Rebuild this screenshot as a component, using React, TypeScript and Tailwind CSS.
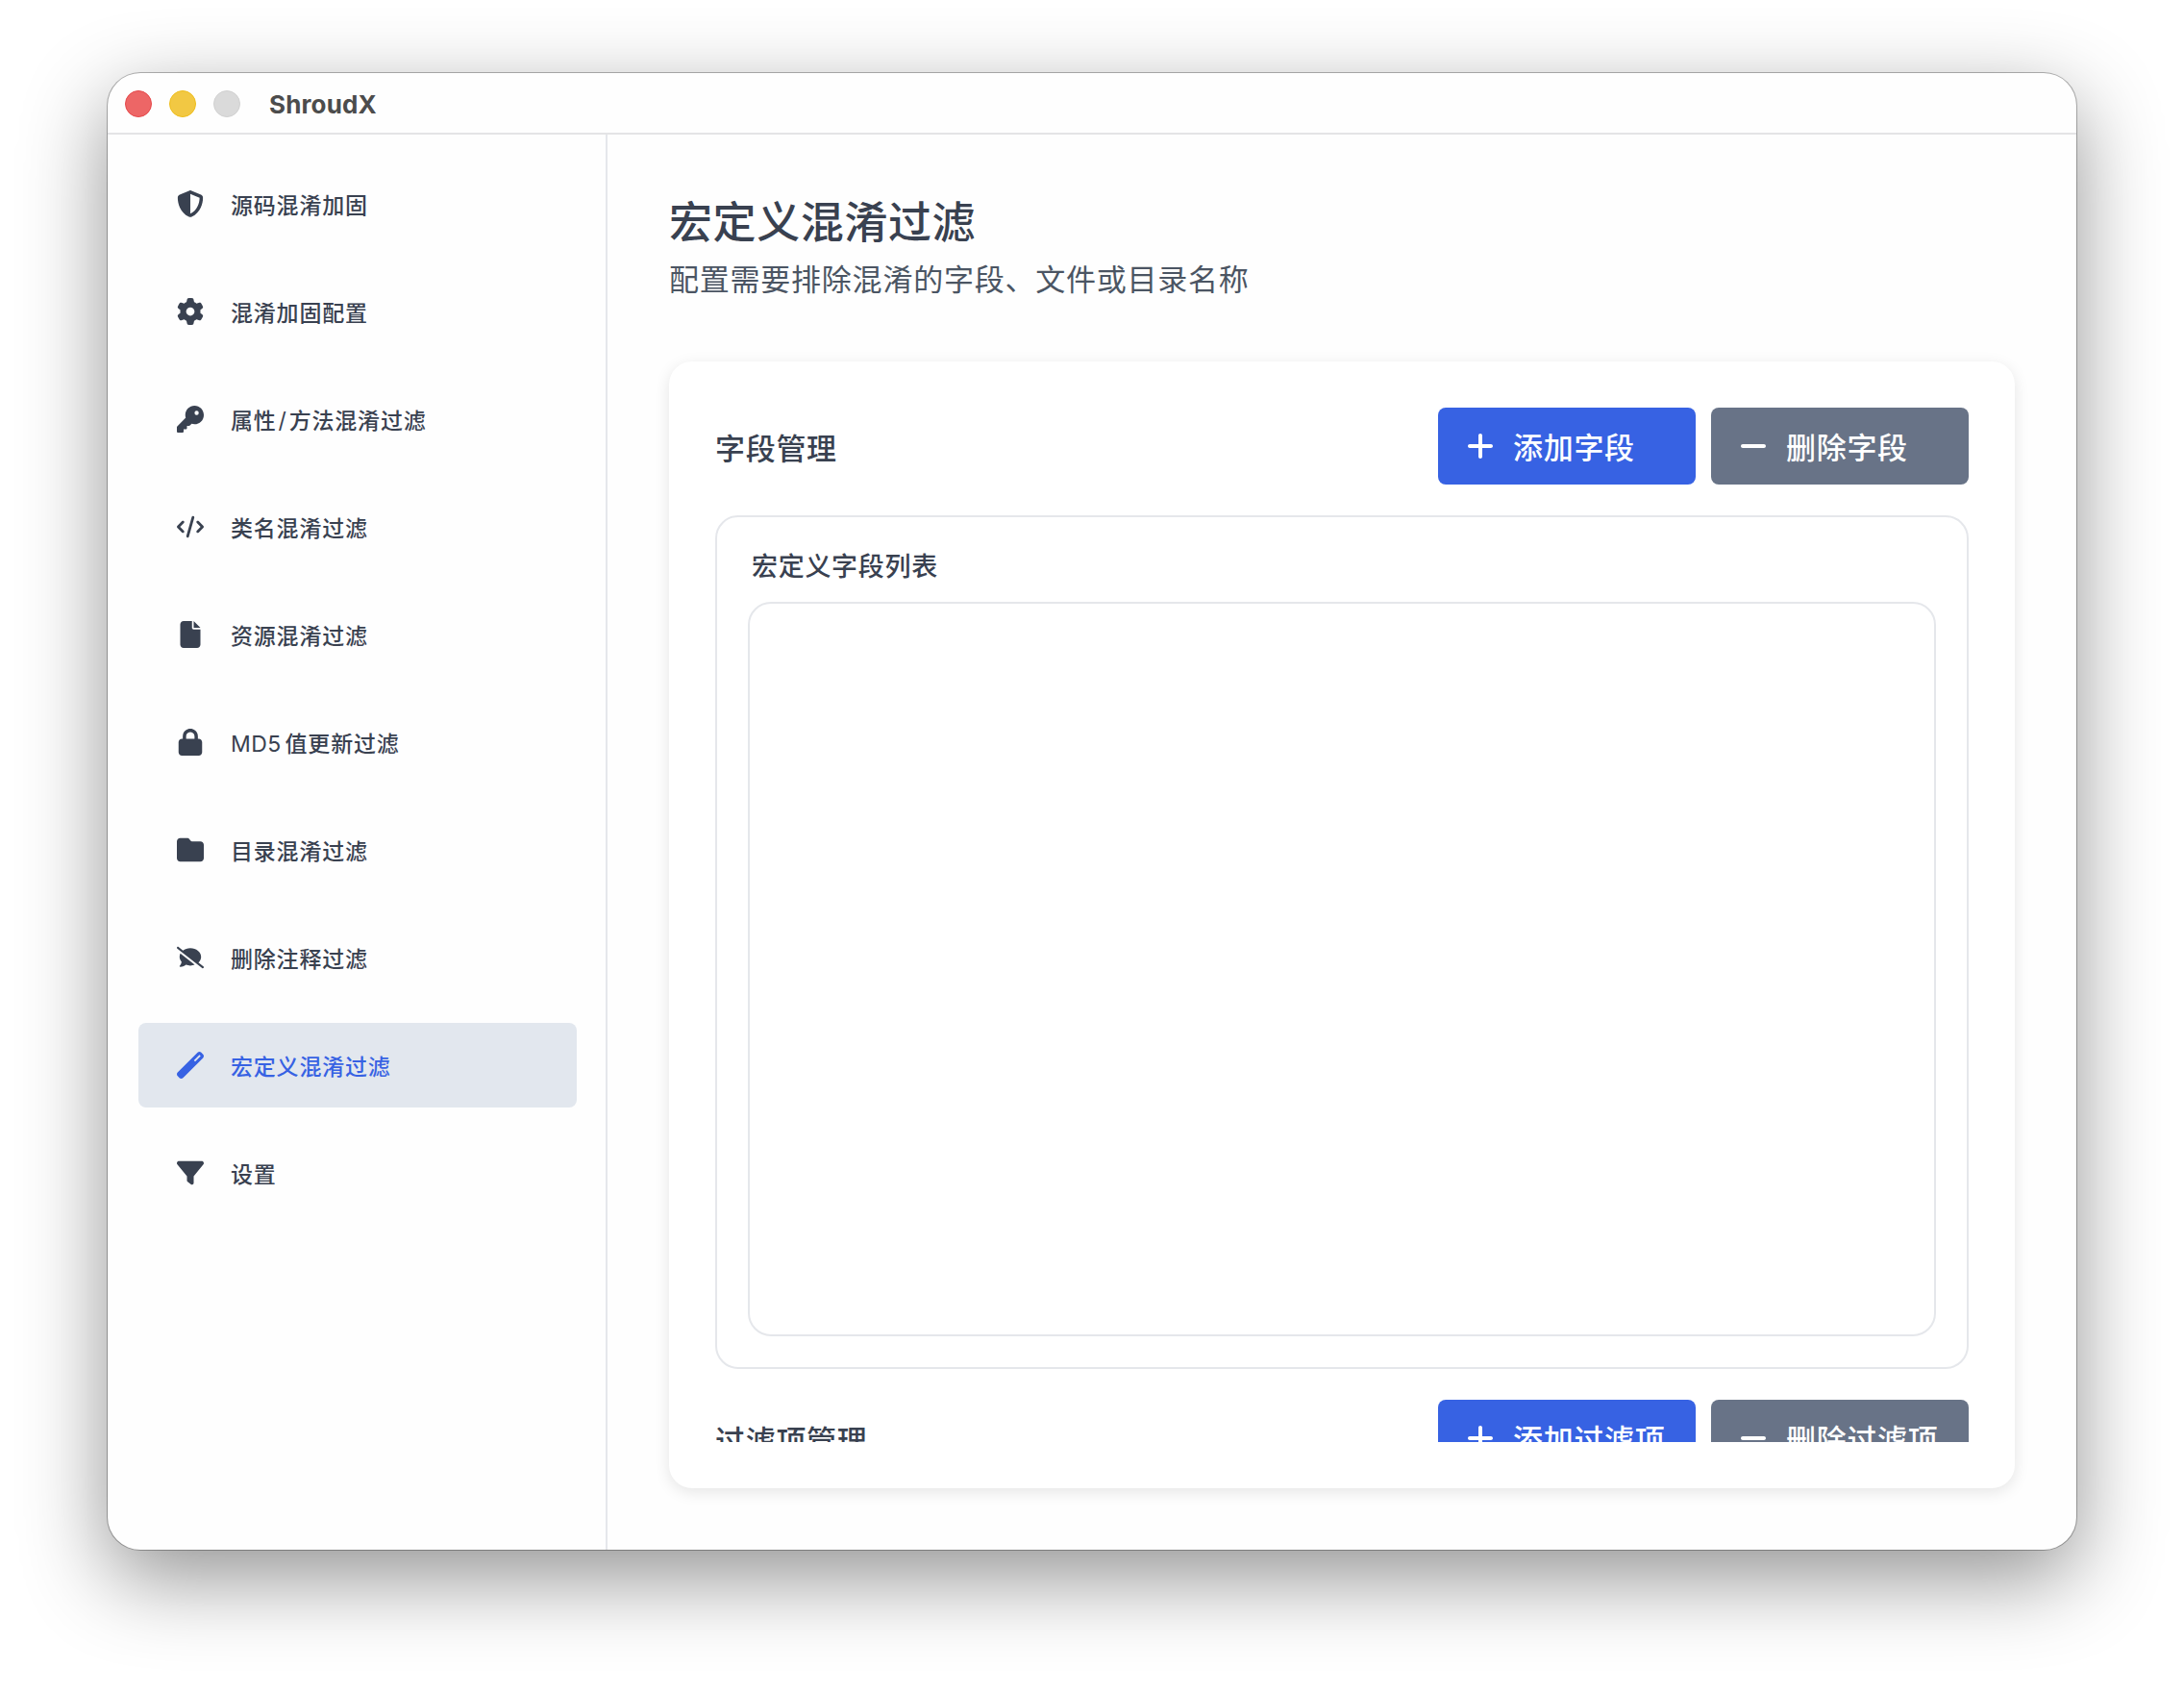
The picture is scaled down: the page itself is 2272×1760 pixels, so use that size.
import type { ReactNode } from "react";
import type { IconType } from "react-icons";
import {
  FaCode,
  FaCommentSlash,
  FaFile,
  FaFilter,
  FaFolder,
  FaGear,
  FaKey,
  FaLock,
  FaMinus,
  FaPlus,
  FaShieldHalved,
  FaWandMagic,
} from "react-icons/fa6";

type NavItem = {
  id: string;
  label: ReactNode;
  icon: IconType;
};

const NAV_ITEMS: NavItem[] = [
  { id: "source", label: "源码混淆加固", icon: FaShieldHalved },
  { id: "config", label: "混淆加固配置", icon: FaGear },
  {
    id: "property",
    label: (
      <>
        属性<span className="mx-[2px] font-normal">/</span>方法混淆过滤
      </>
    ),
    icon: FaKey,
  },
  { id: "class", label: "类名混淆过滤", icon: FaCode },
  { id: "resource", label: "资源混淆过滤", icon: FaFile },
  {
    id: "md5",
    label: (
      <>
        <span className="mr-1 font-normal tracking-[0.4px]">MD5</span>
        值更新过滤
      </>
    ),
    icon: FaLock,
  },
  { id: "directory", label: "目录混淆过滤", icon: FaFolder },
  { id: "comment", label: "删除注释过滤", icon: FaCommentSlash },
  { id: "macro", label: "宏定义混淆过滤", icon: FaWandMagic },
  { id: "settings", label: "设置", icon: FaFilter },
];

const ACTIVE_ID = "macro";

function TitleBar() {
  return (
    <header className="flex h-16 shrink-0 items-center border-b-2 border-[#e4e4e6] pt-[2px] pl-[18px]">
      <div className="flex gap-[18px]">
        <span className="size-7 rounded-full border border-[#e5484a] bg-[#ed6666]" />
        <span className="size-7 rounded-full border border-[#eebd1c] bg-[#f2c843]" />
        <span className="size-7 rounded-full border border-[#d0d0d0] bg-[#dadada]" />
      </div>
      <h1 className="ml-[30px] text-[26px] font-bold tracking-[0.15px] text-[#4c4c4c]">
        ShroudX
      </h1>
    </header>
  );
}

function Sidebar() {
  return (
    <nav className="flex w-[520px] shrink-0 flex-col gap-6 border-r-2 border-[#e5e7eb] pt-7 pr-[30px] pl-8">
      {NAV_ITEMS.map(({ id, label, icon: Icon }) => (
        <a
          key={id}
          className={`flex h-22 items-center gap-7 rounded-lg pl-10 text-[23px] font-medium tracking-[0.8px] ${
            id === ACTIVE_ID
              ? "bg-[#e2e7ee] text-[#3762e3]"
              : "text-[#394150]"
          }`}
        >
          <Icon className="size-7" />
          <span className="pt-[5px]">{label}</span>
        </a>
      ))}
    </nav>
  );
}

type ActionButtonProps = {
  label: string;
  icon: IconType;
  variant: "primary" | "secondary";
};

function ActionButton({ label, icon: Icon, variant }: ActionButtonProps) {
  return (
    <button
      className={`flex h-20 w-[268px] items-center rounded-lg pl-7 text-[31px] font-medium tracking-[0.7px] text-white ${
        variant === "primary" ? "bg-[#3762e3]" : "bg-[#687387]"
      }`}
    >
      <Icon className="size-8" />
      <span className="ml-[18px] pt-1 whitespace-nowrap">{label}</span>
    </button>
  );
}

type SectionHeaderProps = {
  title: string;
  addLabel: string;
  removeLabel: string;
};

function SectionHeader({ title, addLabel, removeLabel }: SectionHeaderProps) {
  return (
    <div className="flex h-20 shrink-0 items-center justify-between">
      <h3 className="pt-[6px] text-[31px] font-medium tracking-[0.7px] text-[#394150]">
        {title}
      </h3>
      <div className="flex gap-4">
        <ActionButton label={addLabel} icon={FaPlus} variant="primary" />
        <ActionButton label={removeLabel} icon={FaMinus} variant="secondary" />
      </div>
    </div>
  );
}

export default function App() {
  return (
    <div className="h-[1760px] w-[2272px] overflow-hidden bg-white px-28 pt-19 font-['Inter','Noto_Sans_CJK_SC',sans-serif]">
      <div className="flex h-[1536px] w-[2048px] flex-col overflow-hidden rounded-[34px] bg-[#fefefe] shadow-[0_0_0_1px_rgba(0,0,0,0.28),0_29px_88px_rgba(0,0,0,0.43)]">
        <TitleBar />
        <div className="flex min-h-0 flex-1">
          <Sidebar />
          <main className="flex min-w-0 flex-1 flex-col p-16">
            <h2 className="pt-[2px] text-[45px] leading-[52px] font-medium tracking-[0.6px] text-[#394150]">
              宏定义混淆过滤
            </h2>
            <p className="mt-[7px] text-[31px] leading-[52px] tracking-[0.77px] text-[#4b5563]">
              配置需要排除混淆的字段、文件或目录名称
            </p>
            <section className="mt-[59px] flex min-h-0 flex-1 flex-col rounded-3xl bg-white p-12 shadow-[0_4px_16px_rgba(0,0,0,0.1)]">
              <div className="flex min-h-0 flex-1 flex-col gap-8 overflow-hidden">
                <SectionHeader
                  title="字段管理"
                  addLabel="添加字段"
                  removeLabel="删除字段"
                />
                <div className="flex h-[888px] shrink-0 flex-col rounded-3xl border-2 border-[#e5e7eb] p-8">
                  <h4 className="h-14 pt-[3px] pl-1 text-[27px] leading-[34px] font-medium tracking-[0.7px] text-[#394150]">
                    宏定义字段列表
                  </h4>
                  <div className="flex-1 rounded-3xl border-2 border-[#e5e7eb]" />
                </div>
                <SectionHeader
                  title="过滤项管理"
                  addLabel="添加过滤项"
                  removeLabel="删除过滤项"
                />
              </div>
            </section>
          </main>
        </div>
      </div>
    </div>
  );
}
